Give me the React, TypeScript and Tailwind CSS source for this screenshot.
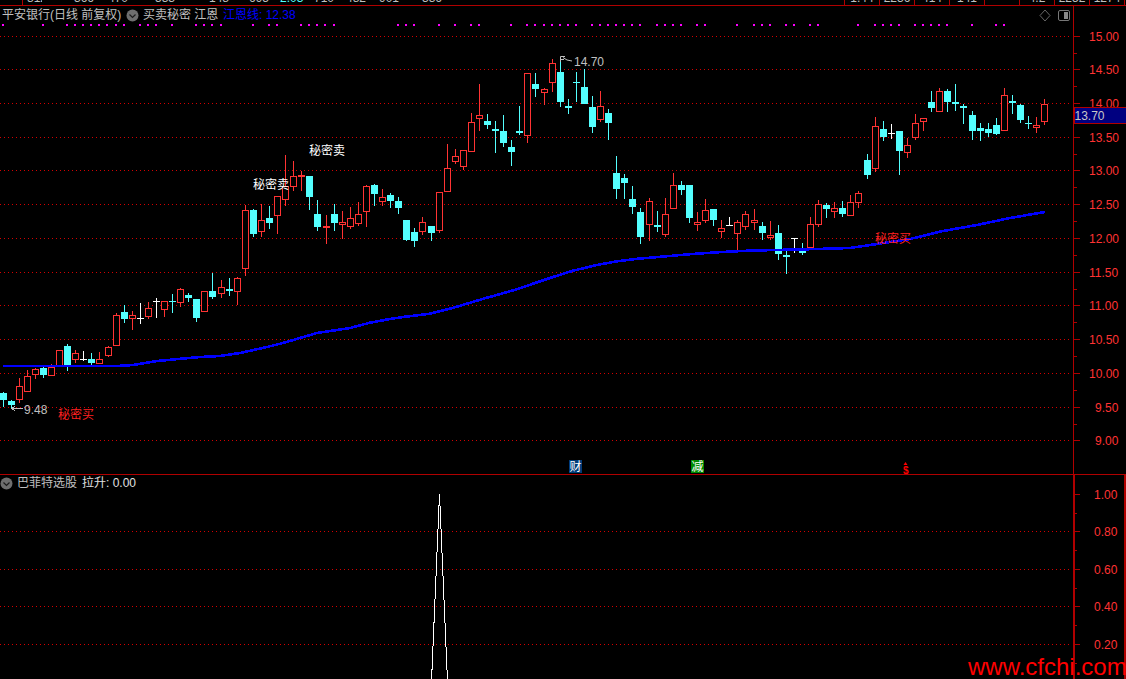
// 平安银行 日线 K线图
type Candle = [number, "r" | "c" | "w", number, number, number, number];

// x, kind, body top, body bottom, wick top, wick bottom
const candles: Candle[] = [
  [3, "c", 393, 400, 392, 407], [11, "c", 401, 405, 400, 408], [19, "r", 386, 400, 378, 403], [27, "r", 376, 392, 370, 392],
  [35, "r", 369, 375, 368, 379], [43, "c", 368, 375, 365, 378], [51, "r", 367, 376, 364, 376], [59, "r", 350, 367, 350, 367],
  [67, "c", 346, 365, 344, 371], [75, "r", 353, 360, 350, 363], [83, "w", 359, 360, 351, 361], [91, "c", 359, 363, 353, 365],
  [99, "r", 359, 364, 352, 364], [108, "r", 347, 356, 346, 357], [116, "r", 315, 346, 313, 346], [124, "c", 312, 319, 305, 323],
  [132, "r", 315, 319, 311, 330], [140, "w", 318, 319, 303, 324], [148, "r", 308, 317, 302, 319], [156, "w", 301, 302, 298, 318],
  [164, "r", 301, 310, 301, 317], [172, "c", 301, 302, 294, 313], [180, "r", 289, 303, 288, 307], [188, "c", 295, 298, 293, 302],
  [196, "c", 299, 318, 299, 322], [204, "r", 291, 312, 291, 312], [212, "c", 291, 297, 273, 299], [221, "r", 287, 294, 280, 298],
  [229, "c", 289, 291, 278, 296], [237, "r", 278, 292, 277, 305], [245, "r", 210, 269, 205, 276], [253, "c", 210, 234, 209, 237],
  [261, "r", 220, 232, 204, 237], [269, "c", 218, 223, 206, 229], [277, "r", 196, 216, 196, 234], [285, "r", 186, 200, 155, 206],
  [293, "r", 176, 187, 161, 191], [301, "r", 175, 177, 171, 191], [309, "c", 176, 197, 176, 210], [317, "c", 214, 227, 200, 231],
  [326, "r", 226, 228, 215, 244], [334, "c", 214, 223, 204, 231], [342, "r", 222, 225, 211, 239], [350, "r", 218, 227, 207, 229],
  [358, "r", 214, 224, 202, 226], [366, "r", 186, 212, 185, 227], [374, "c", 185, 194, 184, 206], [382, "r", 197, 202, 189, 206],
  [390, "c", 195, 201, 193, 208], [398, "c", 201, 208, 197, 214], [406, "c", 220, 240, 220, 241], [414, "c", 232, 241, 228, 247],
  [422, "r", 222, 232, 217, 235], [431, "c", 226, 233, 226, 241], [439, "r", 192, 231, 192, 233], [447, "r", 168, 192, 144, 192],
  [455, "r", 156, 162, 149, 164], [463, "r", 150, 167, 150, 170], [471, "r", 122, 152, 113, 152], [479, "r", 115, 119, 84, 131],
  [487, "c", 121, 125, 114, 129], [495, "c", 129, 131, 121, 153], [503, "c", 131, 143, 115, 147], [511, "c", 147, 152, 140, 166],
  [519, "c", 131, 133, 106, 135], [527, "r", 73, 136, 73, 143], [535, "c", 84, 89, 73, 97], [544, "r", 89, 93, 88, 105],
  [552, "r", 63, 83, 59, 92], [560, "c", 72, 102, 57, 107], [568, "c", 106, 108, 99, 114], [576, "c", 82, 83, 72, 102],
  [584, "c", 87, 104, 69, 104], [592, "c", 107, 127, 96, 133], [600, "r", 106, 120, 91, 122], [608, "c", 113, 123, 109, 140],
  [616, "c", 173, 189, 156, 199], [624, "c", 178, 183, 174, 199], [632, "c", 199, 207, 186, 214], [640, "c", 212, 237, 208, 244],
  [649, "r", 201, 225, 198, 241], [657, "c", 225, 227, 211, 232], [665, "r", 214, 235, 198, 237], [673, "r", 185, 209, 173, 209],
  [681, "c", 185, 190, 181, 195], [689, "c", 185, 218, 185, 223], [697, "r", 222, 225, 212, 231], [705, "r", 210, 221, 199, 223],
  [713, "c", 209, 220, 209, 226], [721, "r", 228, 232, 220, 238], [729, "w", 225, 226, 217, 226], [737, "r", 222, 234, 220, 251],
  [745, "r", 214, 227, 211, 230], [754, "r", 220, 223, 209, 230], [762, "c", 226, 233, 222, 240], [770, "r", 235, 238, 221, 240],
  [778, "c", 233, 254, 225, 260], [786, "c", 255, 257, 251, 274], [794, "w", 238, 239, 238, 253], [802, "c", 251, 253, 243, 255],
  [810, "r", 224, 248, 217, 249], [818, "r", 204, 225, 200, 227], [826, "c", 205, 209, 203, 218], [834, "r", 208, 212, 202, 218],
  [842, "c", 208, 214, 201, 217], [850, "r", 202, 216, 195, 216], [858, "r", 193, 203, 191, 208], [867, "c", 160, 175, 154, 179],
  [875, "r", 126, 169, 117, 172], [883, "c", 129, 137, 121, 141], [891, "w", 133, 134, 124, 139], [899, "c", 131, 151, 131, 175],
  [907, "r", 145, 153, 138, 158], [915, "r", 123, 138, 114, 140], [923, "r", 118, 122, 118, 131], [931, "c", 102, 108, 91, 112],
  [939, "r", 91, 112, 88, 112], [947, "c", 91, 102, 89, 112], [955, "c", 102, 104, 84, 111], [963, "c", 106, 108, 104, 124],
  [972, "c", 115, 131, 111, 140], [980, "c", 128, 131, 123, 141], [988, "c", 129, 133, 123, 137], [996, "c", 125, 134, 118, 135],
  [1004, "r", 95, 131, 88, 131], [1012, "c", 101, 103, 95, 114], [1020, "c", 105, 120, 104, 123], [1028, "c", 123, 124, 116, 129],
  [1036, "r", 125, 128, 117, 133], [1044, "r", 104, 122, 99, 125],
];

const dots = [
  3, 43, 67, 75, 83, 91, 99, 107, 116, 124, 140, 148, 156, 172, 196, 204, 212, 221, 253, 269, 277, 301, 309, 317, 325, 334,
  398, 406, 414, 439, 455, 471, 479, 511, 527, 535, 544, 552, 560, 568, 576, 592, 600, 608, 616, 624, 632, 640, 657, 665, 673, 681, 697, 705, 737,
  754, 762, 770, 786, 794, 810, 818, 858, 875, 883, 891, 899, 915, 923, 931, 939, 947, 972, 996, 1004,
];

const jiangEn =
  "3,366 36,366 117,366 133,365 157,361 200,357 220,356 240,353 267,347 283,343 317,333 350,328 370,322.7 390,319 403,317 430,313.7 450,308.7 467,303.7 487,297.7 517,289.3 533,283.7 553,277 573,270.7 597,265 617,261.3 638,258.7 658,257 692,254 722,252 750,250.6 817,249 850,248 877,244 910,239 943,231 977,225 1010,218 1045,212";

const gridY = [36.5, 69.5, 103.5, 137.5, 170.5, 204.5, 238.5, 272.5, 305.5, 339.5, 373.5, 407.5, 440.5];
const priceLabels = ["15.00", "14.50", "14.00", "13.50", "13.00", "12.50", "12.00", "11.50", "11.00", "10.50", "10.00", "9.50", "9.00"];
const subY = [494.5, 531.5, 569.5, 606.5, 644.5];
const subLabels = ["1.00", "0.80", "0.60", "0.40", "0.20"];

const LINE = "#b00000";
const GRID = "#d40000";
const RED = "#ff3333";
const CYAN = "#54ffff";

function CandleMark({ c }: { c: Candle }) {
  const [x, kind, top, bot, hi, lo] = c;
  const mid = x + 0.5;
  if (kind === "r") {
    const thin = bot - top <= 2;
    return (
      <g stroke={RED} shapeRendering="crispEdges">
        <line x1={mid} x2={mid} y1={hi} y2={top} />
        <line x1={mid} x2={mid} y1={bot} y2={lo} />
        {thin ? (
          <rect x={x - 3} y={top} width={7} height={bot - top} fill={RED} stroke="none" />
        ) : (
          <rect x={x - 2.5} y={top + 0.5} width={6} height={bot - top - 1} fill="#000" />
        )}
      </g>
    );
  }
  const color = kind === "c" ? CYAN : "#ffffff";
  return (
    <g shapeRendering="crispEdges">
      <rect x={x} y={hi} width={1} height={lo - hi} fill={color} />
      <rect x={x - 3} y={top} width={7} height={bot - top} fill={color} />
    </g>
  );
}

function Chevron() {
  return (
    <svg width="13" height="13" viewBox="0 0 13 13" className="shrink-0">
      <circle cx="6.5" cy="6.5" r="6" fill="#6e6e6e" />
      <path d="M3.5 5.5 L6.5 8.5 L9.5 5.5" fill="none" stroke="#1c1c1c" strokeWidth="1.2" />
    </svg>
  );
}

function MainChart() {
  return (
    <svg viewBox="0 6 1073 468" className="block w-[1073px] h-[468px]">
      {gridY.map((y) => (
        <line key={y} x1="0" x2="1070" y1={y} y2={y} stroke={GRID} strokeDasharray="1 3" shapeRendering="crispEdges" />
      ))}
      {dots.map((x) => (
        <rect key={x} x={x - 1} y="24" width="2" height="2" fill="#ff00ff" />
      ))}
      {candles.map((c) => (
        <CandleMark key={c[0]} c={c} />
      ))}
      <polyline points={jiangEn} fill="none" stroke="#0000ff" strokeWidth="2.6" shapeRendering="crispEdges" />

      <text x="253" y="189" fontSize="12" fill="#ffffff">秘密卖</text>
      <text x="309" y="155" fontSize="12" fill="#ffffff">秘密卖</text>
      <text x="58" y="419" fontSize="12" fill="#ff2020">秘密买</text>
      <text x="875" y="243" fontSize="12" fill="#ff2020">秘密买</text>

      <path d="M23 408.5 H12 M15.5 405.5 L12 408.5 L15.5 411.5" fill="none" stroke="#c0c0c0" shapeRendering="crispEdges" />
      <text x="24" y="414" fontSize="12" fill="#c0c0c0">9.48</text>
      <path d="M560.5 62 V56.5 H565 M560.5 59.5 H564 M563 57.5 L567 60 L572 61" fill="none" stroke="#c0c0c0" strokeWidth="1" />
      <text x="574" y="66" fontSize="12" fill="#c0c0c0">14.70</text>

      <rect x="569" y="460" width="13" height="13" fill="#003c78" />
      <text x="569.5" y="471" fontSize="12" fill="#ffffff">财</text>
      <rect x="691" y="460" width="13" height="13" fill="#008a00" />
      <text x="691.5" y="471" fontSize="12" fill="#ffffff">减</text>
      <path d="M905.5 462 L907.5 465 H903.5 Z" fill="#ff0000" />
      <text x="903" y="473.5" fontSize="10" fontWeight="700" fill="#ff0000">$</text>

      {/* 右上角小图标 */}
      <path d="M1045 10 L1050 15.5 L1045 21 L1040 15.5 Z" fill="none" stroke="#666666" />
      <rect x="1058.5" y="10.5" width="11" height="10" rx="1.5" fill="none" stroke="#777777" />
      <rect x="1064" y="12" width="4" height="7" fill="#8a8a8a" />
    </svg>
  );
}

function PriceAxis() {
  return (
    <svg viewBox="1074 6 52 468" className="block w-[52px] h-[468px]">
      {gridY.map((y, i) => (
        <g key={y} shapeRendering="crispEdges">
          <line x1="1074" x2="1080" y1={y} y2={y} stroke={LINE} />
          {i < gridY.length - 1 && <line x1="1074" x2="1077" y1={y + 17} y2={y + 17} stroke={LINE} />}
        </g>
      ))}
      {priceLabels.map((t, i) => (
        <text key={t} x={t.length === 4 ? 1095 : 1089} y={gridY[i] + 4.5} fontSize="12" fill={RED}>
          {t}
        </text>
      ))}
      <rect x="1074" y="107.5" width="52" height="16" fill="#000080" stroke={LINE} shapeRendering="crispEdges" />
      <text x="1074.5" y="120" fontSize="12" fill="#c8c8c8">13.70</text>
    </svg>
  );
}

function SubChart() {
  return (
    <svg viewBox="0 475 1073 204" className="block w-[1073px] h-[204px]">
      {subY.slice(1).map((y) => (
        <line key={y} x1="0" x2="1070" y1={y} y2={y} stroke={GRID} strokeDasharray="1 3" shapeRendering="crispEdges" />
      ))}
      <g stroke="#ffffff" shapeRendering="crispEdges">
        <line x1="439.5" y1="494" x2="430.5" y2="705" />
        <line x1="439.5" y1="494" x2="448.5" y2="705" />
      </g>
    </svg>
  );
}

function SubAxis() {
  return (
    <svg viewBox="1075 475 49 204" className="block w-[49px] h-[204px]">
      {subY.map((y, i) => (
        <g key={y} shapeRendering="crispEdges">
          <line x1="1075" x2="1080" y1={y} y2={y} stroke={LINE} />
          <line x1="1075" x2="1077" y1={y + 18.5} y2={y + 18.5} stroke={LINE} />
          <text x="1094" y={y + 4.5} fontSize="12" fill={RED} shapeRendering="auto">
            {subLabels[i]}
          </text>
        </g>
      ))}
    </svg>
  );
}

// 顶部被裁切的一行数据,只露出文字底部
function TopStrip() {
  const cell = "w-[35px] h-full border-l border-[#b00000] overflow-hidden text-center";
  const clip = "block -mt-[8px] leading-[12px]";
  return (
    <div className="flex h-[6px] border-b border-[#b00000] text-[12px] text-[#c0c0c0] overflow-hidden">
      <div className="w-[22px]" />
      <div className="flex w-[822px] h-full border-l border-[#b00000]">
        <span className={`${clip} ml-[4px] w-[15px] overflow-hidden`}>812</span>
        <span className={`${clip} ml-[32px] w-[16px]`}>366</span>
        <span className={`${clip} ml-[18px] w-[18px]`}>470</span>
        <span className={`${clip} ml-[29px] w-[18px]`}>533</span>
        <span className={`${clip} ml-[36px] w-[15px]`}>148</span>
        <span className={`${clip} ml-[25px] w-[18px]`}>695</span>
        <span className={`${clip} ml-[13px] w-[24px] text-[#54ffff]`}>2.03</span>
        <span className={`${clip} ml-[10px] w-[18px]`}>710</span>
        <span className={`${clip} ml-[14px] w-[18px]`}>482</span>
        <span className={`${clip} ml-[15px] w-[18px]`}>901</span>
        <span className={`${clip} ml-[25px] w-[18px]`}>336</span>
      </div>
      <div className={cell}><span className={clip}>1.44</span></div>
      <div className={cell}><span className={clip}>2236</span></div>
      <div className={cell}><span className={clip}>414</span></div>
      <div className={cell}><span className={clip}>141</span></div>
      <div className={cell} />
      <div className={cell}><span className={clip}>4.2</span></div>
      <div className={cell}><span className={clip}>2252</span></div>
      <div className={cell}><span className={clip}>1274</span></div>
      <div className="flex-1 border-l border-[#b00000]" />
    </div>
  );
}

export default function App() {
  return (
    <div className="w-[1126px] h-[679px] bg-black overflow-hidden relative flex flex-col font-['Liberation_Sans','Noto_Sans_CJK_SC',sans-serif]">
      <TopStrip />

      {/* 主图 */}
      <div className="flex h-[468px]">
        <div className="relative w-[1073px]">
          <MainChart />
          <div className="absolute left-[2px] top-0 h-[18px] flex items-center text-[12px] text-[#c0c0c0] whitespace-nowrap">
            <span className="w-[124px]">平安银行(日线 前复权)</span>
            <Chevron />
            <span className="ml-[4px] w-[80px]">买卖秘密 江恩</span>
            <span className="text-[#0000ff]">江恩线: 12.38</span>
          </div>
        </div>
        <div className="border-l border-[#b00000]">
          <PriceAxis />
        </div>
      </div>

      {/* 副图 */}
      <div className="flex flex-1 border-t border-[#b00000]">
        <div className="relative w-[1073px]">
          <SubChart />
          <div className="absolute left-0 top-0 h-[16px] flex items-center text-[12px] text-[#c0c0c0] whitespace-nowrap">
            <Chevron />
            <span className="ml-[4px] w-[65px]">巴菲特选股</span>
            <span className="text-[#e0e0e0]">拉升: 0.00</span>
          </div>
        </div>
        <div className="w-[53px] border-x-2 border-[#b00000]">
          <SubAxis />
        </div>
      </div>

      {/* 水印 */}
      <span className="absolute left-[968px] top-[651px] text-[24px] leading-[32px] text-[#ff0000] font-['Liberation_Sans',sans-serif]">
        www.cfchi.com
      </span>
    </div>
  );
}
